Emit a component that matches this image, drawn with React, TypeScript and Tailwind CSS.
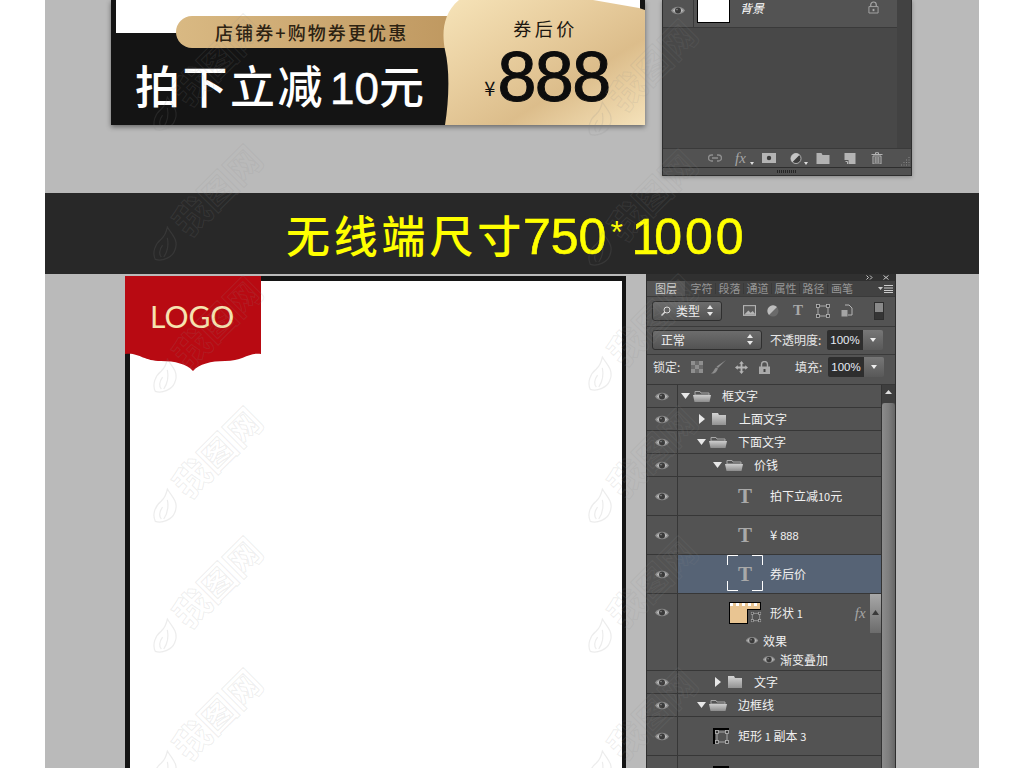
import React from "react";

const Eye = ({ className = "" }: { className?: string }) => (
  <svg viewBox="0 0 14 11" className={`w-[14px] h-[11px] shrink-0 ${className}`}>
    <path d="M0 5.5C3 0.5 11 0.5 14 5.5C11 10.5 3 10.5 0 5.5Z" fill="#8e8e8e" />
    <path d="M1.8 5.5C4 2.2 10 2.2 12.2 5.5C10 8.8 4 8.8 1.8 5.5Z" fill="#b9b9b9" />
    <circle cx="7" cy="5.5" r="3" fill="#3a3a3a" />
    <circle cx="6" cy="4.6" r="0.8" fill="#8e8e8e" />
  </svg>
);

const OpenFolder = () => (
  <svg viewBox="0 0 18 12" className="w-[18px] h-[12px] shrink-0">
    <defs>
      <linearGradient id="of" x1="0" y1="0" x2="0" y2="1">
        <stop offset="0" stopColor="#cdcdcd" />
        <stop offset="1" stopColor="#8c8c8c" />
      </linearGradient>
    </defs>
    <path d="M2 5V1.5H7L8 3H16V5Z" fill="none" stroke="#a8a8a8" />
    <path d="M0 5H18L16.5 12H1.5Z" fill="url(#of)" />
  </svg>
);

const ClosedFolder = () => (
  <svg viewBox="0 0 14 12" className="w-[14px] h-[12px] shrink-0">
    <defs>
      <linearGradient id="cf" x1="0" y1="0" x2="0" y2="1">
        <stop offset="0" stopColor="#d5d5d5" />
        <stop offset="1" stopColor="#929292" />
      </linearGradient>
    </defs>
    <path d="M0 0H6L7 2H14V12H0Z" fill="url(#cf)" />
  </svg>
);

const Down = () => (
  <svg viewBox="0 0 9 6" className="w-[9px] h-[6px] shrink-0">
    <path d="M0 0H9L4.5 6Z" fill="#e8e8e8" />
  </svg>
);
const Right = () => (
  <svg viewBox="0 0 6 10" className="w-[6px] h-[10px] shrink-0">
    <path d="M0 0L6 5L0 10Z" fill="#e8e8e8" />
  </svg>
);

const TGlyph = () => (
  <span className="font-['Liberation_Serif',serif] font-bold text-[21px] leading-none text-[#a9a9a9] w-[16px] text-center">
    T
  </span>
);

const ShapeCorners = () => (
  <svg viewBox="0 0 14 14" className="w-[14px] h-[14px]">
    <rect x="2" y="2" width="10" height="10" fill="none" stroke="#a8a8a8" />
    <g fill="#3c3c3c" stroke="#b8b8b8" strokeWidth="0.8">
      <rect x="0.5" y="0.5" width="3" height="3" />
      <rect x="10.5" y="0.5" width="3" height="3" />
      <rect x="0.5" y="10.5" width="3" height="3" />
      <rect x="10.5" y="10.5" width="3" height="3" />
    </g>
  </svg>
);

const RowWrap = ({
  h,
  selected,
  children,
  eye = true,
}: {
  h: string;
  selected?: boolean;
  children: React.ReactNode;
  eye?: boolean;
}) => (
  <div className={`flex shrink-0 border-b border-[#373737] ${h}`}>
    <div className="w-[31px] shrink-0 border-r border-[#373737] flex items-center justify-center">
      {eye && <Eye />}
    </div>
    <div className={`flex-1 flex items-center ${selected ? "bg-[#566375]" : ""}`}>{children}</div>
  </div>
);

const Label = ({ children, className = "" }: { children: React.ReactNode; className?: string }) => (
  <span className={`text-[12px] leading-none text-[#f0f0f0] whitespace-nowrap ${className}`}>{children}</span>
);

const GroupRow = ({ pl, open, name, gap }: { pl: string; open: boolean; name: string; gap: string }) => (
  <RowWrap h="h-[23px]">
    <div className={`flex items-center ${pl}`}>
      {open ? <Down /> : <Right />}
      <span className={open ? "ml-[3px]" : "ml-[7px]"}>{open ? <OpenFolder /> : <ClosedFolder />}</span>
      <Label className={gap}>{name}</Label>
    </div>
  </RowWrap>
);

const TextRow = ({ name, selected }: { name: React.ReactNode; selected?: boolean }) => (
  <RowWrap h="h-[39px]" selected={selected}>
    <div className="flex items-center pl-[59px]">
      <div className="relative w-[16px] flex justify-center">
        <TGlyph />
        {selected && (
          <div className="absolute -left-[10px] -top-[9px] w-[36px] h-[36px]">
            <svg viewBox="0 0 36 36" className="w-[36px] h-[36px]">
              <path d="M0.5 10V0.5H11M25 0.5H35.5V10M35.5 26V35.5H25M11 35.5H0.5V26" fill="none" stroke="#fff" />
            </svg>
          </div>
        )}
      </div>
      <Label className="ml-[17px]">{name}</Label>
    </div>
  </RowWrap>
);

const Sel = ({ w, children }: { w: string; children: React.ReactNode }) => (
  <div className={`${w} flex items-center justify-between rounded-[3px] border border-[#2f2f2f] bg-gradient-to-b from-[#6d6d6d] to-[#535353] px-[8px] text-[12px] text-[#eee]`}>
    {children}
    <svg viewBox="0 0 6 11" className="w-[6px] h-[11px]">
      <path d="M3 0L6 4H0ZM3 11L0 7H6Z" fill="#e8e8e8" />
    </svg>
  </div>
);

const Pct = () => (
  <div className="flex h-[20px] w-[56px] rounded-[2px] overflow-hidden">
    <div className="w-[36px] bg-[#2e2e2e] text-[11.5px] leading-[20px] text-center text-[#e6ecf5] font-['Liberation_Sans',sans-serif]">100%</div>
    <div className="flex-1 bg-gradient-to-b from-[#777] to-[#595959] flex items-center justify-center">
      <svg viewBox="0 0 6 4" className="w-[6px] h-[4px]">
        <path d="M0 0H6L3 4Z" fill="#eee" />
      </svg>
    </div>
  </div>
);

const Tiny = () => (
  <svg viewBox="0 0 4 3" className="w-[4px] h-[3px] self-end -ml-[12px] -mr-[5px] mb-[2px]">
    <path d="M0 0H4L2 3Z" fill="#ddd" />
  </svg>
);

const marks: [number, number][] = [
  [210, 70], [645, 75],
  [210, 200], [645, 205],
  [210, 332], [645, 330],
  [210, 462], [645, 462],
  [210, 592], [645, 592],
  [210, 724], [645, 724],
];

const Watermark = ({ x, y }: { x: number; y: number }) => (
  <div
    className="absolute flex items-center -rotate-45 w-[160px] h-[40px] -ml-[80px] -mt-[20px]"
    style={{ left: x, top: y }}
  >
    <svg viewBox="0 0 30 30" className="w-[36px] h-[36px] shrink-0 rotate-45">
      <path d="M16 1C20 8 26 12 22 21C20 26 12 30 6 28C3 22 6 15 11 11C13 9 15 6 16 1ZM12 16C9 20 9 24 11 26M16 10C17 15 17 20 13 26" fill="none" stroke="#8a8a8a" strokeOpacity="0.16" />
    </svg>
    <span className="ml-[2px] text-[36px] leading-[40px] font-bold whitespace-nowrap text-transparent [-webkit-text-stroke:1px_rgba(140,140,140,0.15)]">
      我图网
    </span>
  </div>
);

export default function App() {
  return (
    <div className="relative w-[1024px] h-[768px] overflow-hidden bg-white font-['Liberation_Sans','Noto_Sans_CJK_SC',sans-serif]">
      <div className="ml-[45px] w-[934px] h-[768px] bg-[#bababa] flex flex-col">
        {/* top preview */}
        <div className="h-[193px] shrink-0 flex items-start pl-[66px] font-['Noto_Sans_CJK_SC',sans-serif]">
          <div className="relative w-[534px] h-[125px] bg-[#141414] shadow-[0_2px_5px_rgba(0,0,0,0.45)]">
            <div className="ml-[5px] w-[524px] h-[33px] bg-white" />
            <div className="pl-[24px] pt-[27px] text-white font-medium text-[45px] leading-[50px] tracking-[2.5px] whitespace-nowrap">
              拍下立减<span className="font-['Liberation_Sans',sans-serif] font-normal text-[44px] tracking-[0px] ml-[5px] [-webkit-text-stroke:0.5px_#ffffff]">10</span>元
            </div>
            <div className="absolute left-[65px] top-[16px] w-[280px] h-[32px] rounded-l-[16px] bg-gradient-to-r from-[#d9b983] to-[#bf9860] text-[#2c2212] font-medium text-[18px] leading-[32px] pl-[39px] tracking-[2.1px] whitespace-nowrap">
              店铺券+购物券更优惠
            </div>
            <div className="absolute left-[332px] top-0 w-[202px] h-[125px] flex flex-col items-center">
              <svg viewBox="0 0 202 125" className="absolute inset-0 w-[202px] h-[125px]">
                <defs>
                  <linearGradient id="gold" x1="0" y1="0" x2="1" y2="1">
                    <stop offset="0" stopColor="#f6e3b8" />
                    <stop offset="0.35" stopColor="#e9cfa0" />
                    <stop offset="0.65" stopColor="#dcbd8b" />
                    <stop offset="1" stopColor="#f5e2ba" />
                  </linearGradient>
                </defs>
                <path d="M2 125C6 100 7 70 2 50C-1 35 -1 14 16 0H150L196 8L202 10V125Z" fill="url(#gold)" />
              </svg>
              <div className="relative mt-[15px] ml-[3px] text-[18px] leading-[26px] tracking-[3.5px] text-[#1c1710]">券后价</div>
              <div className="relative flex items-end mt-[6px] ml-[6px]">
                <span className="text-[20px] leading-[22px] mb-[8px] mr-[2px] text-[#111]">¥</span>
                <span className="font-['Liberation_Sans',sans-serif] text-[70px] leading-[60px] tracking-[-1.5px] text-[#0d0d0d] [-webkit-text-stroke:1px_#0d0d0d]">888</span>
              </div>
            </div>
          </div>

          <div className="ml-[17px] w-[250px] h-[176px] bg-[#484848] border border-t-0 border-[#2e2e2e] shadow-[0_1px_4px_rgba(0,0,0,0.3)] flex flex-col">
            <div className="flex-1 flex">
              <div className="w-[234px] flex flex-col">
                <div className="h-[28px] flex bg-[#535353] border-b border-[#3a3a3a]">
                  <div className="w-[31px] border-r border-[#3a3a3a] flex items-center justify-center pb-[7px]">
                    <Eye />
                  </div>
                  <div className="w-[33px] h-[23px] ml-[3px] bg-white border border-black border-t-0" />
                  <span className="ml-[10px] text-[12px] leading-[16px] italic text-white">背景</span>
                  <svg viewBox="0 0 12 14" className="w-[11px] h-[13px] ml-[104px] mt-[1px]">
                    <path d="M3 6V4a3 3 0 0 1 6 0v2" fill="none" stroke="#a8a8a8" strokeWidth="1.3" />
                    <path d="M1 6H11V13H1Z" fill="none" stroke="#a8a8a8" />
                    <rect x="5" y="8.5" width="2" height="2.5" fill="#a8a8a8" />
                  </svg>
                </div>
              </div>
              <div className="flex-1 bg-[#424242]" />
            </div>
            <div className="h-[20px] bg-[#525252] border-t border-[#3a3a3a] border-b-[#2e2e2e] border-b flex items-center pl-[45px] gap-[13px]">
              <svg viewBox="0 0 14 8" className="w-[14px] h-[8px]">
                <path d="M5 1H3.5a3 3 0 0 0 0 6H5M9 1h1.5a3 3 0 0 1 0 6H9M4 4H10" fill="none" stroke="#8e8e8e" strokeWidth="1.4" />
              </svg>
              <span className="w-[14px] text-[15px] leading-none italic text-[#a5a5a5] font-['Liberation_Serif',serif]">fx</span>
              <Tiny />
              <svg viewBox="0 0 14 10" className="w-[14px] h-[10px]">
                <rect width="14" height="10" fill="#b4b4b4" />
                <circle cx="7" cy="5" r="2.2" fill="#3b3b3b" />
              </svg>
              <svg viewBox="0 0 12 12" className="w-[14px] h-[11px]">
                <circle cx="6" cy="6" r="5.5" fill="#3d3d3d" stroke="#b8b8b8" />
                <path d="M10 2A5.5 5.5 0 0 0 2 10Z" fill="#c5c5c5" />
              </svg>
              <Tiny />
              <svg viewBox="0 0 13 11" className="w-[14px] h-[11px]">
                <path d="M0 0H5L6 2H13V11H0Z" fill="#b2b2b2" />
              </svg>
              <svg viewBox="0 0 11 11" className="w-[14px] h-[11px]">
                <path d="M0 0H11V11H4V7H0Z" fill="#b4b4b4" />
                <path d="M1 8.5H3V11" fill="none" stroke="#b4b4b4" />
              </svg>
              <svg viewBox="0 0 11 12" className="w-[14px] h-[12px]">
                <path d="M0 2.5H11M4 2V0.7H7V2M1.5 4H9.5V12H1.5ZM3.7 5V11M5.5 5V11M7.3 5V11" fill="none" stroke="#b4b4b4" />
              </svg>
              <svg viewBox="0 0 10 10" className="w-[10px] h-[10px] ml-[3px] self-end mb-[1px]">
                <path d="M9 1V2M6.5 3.5V4.5M9 3.5V4.5M4 6V7M6.5 6V7M9 6V7M1.5 8.5V9.5M4 8.5V9.5M6.5 8.5V9.5M9 8.5V9.5" stroke="#8a8a8a" />
              </svg>
            </div>
            <div className="h-[7px] bg-[#505050] flex items-center justify-center">
              <div className="w-[20px] h-[3px] bg-[repeating-linear-gradient(90deg,#262626_0_1px,transparent_1px_2px)]" />
            </div>
          </div>
        </div>

        {/* banner */}
        <div className="h-[81px] shrink-0 bg-[#282828] flex items-center pl-[241px] text-[#ffff00] whitespace-nowrap">
          <span className="font-['Noto_Sans_CJK_SC',sans-serif] font-medium text-[44px] leading-none tracking-[3.8px]">无线端尺寸</span>
          <span className="-ml-[2px] mt-[7px] text-[50px] leading-none [-webkit-text-stroke:0.6px_#ffff00]">750</span>
          <span className="text-[32px] leading-none self-start mt-[23px] w-[25px] pl-[4px]">*</span>
          <span className="mt-[7px] text-[50px] leading-none [-webkit-text-stroke:0.6px_#ffff00]">
            <span className="tracking-[-5px]">1</span>
            <span className="tracking-[3px]">000</span>
          </span>
        </div>

        {/* bottom */}
        <div className="flex-1 flex items-start pl-[80px] overflow-hidden font-['Noto_Sans_CJK_SC',sans-serif]">
          <div className="relative mt-[2px] w-[501px] h-[500px] bg-white border-[5px] border-[#141414] border-r-[4px]">
            <div className="absolute -left-[5px] -top-[5px] w-[136px] h-[96px]">
              <svg viewBox="0 0 136 96" className="absolute inset-0 w-[136px] h-[96px]">
                <path d="M0 0H136V78C124 76 118 85 100 85C86 85 74 88 68 95C62 88 50 85 36 85C18 85 14 76 0 78Z" fill="#b80a12" />
              </svg>
              <span className="relative block pt-[20px] pl-[25px] font-['Lato',sans-serif] font-normal text-[30px] leading-[40px] text-[#f6e3b0]">LOGO</span>
            </div>
          </div>

          <div className="ml-[20px] w-[250px] h-[500px] bg-[#535353] border-x border-[#2e2e2e] flex flex-col">
            <div className="h-[7px] shrink-0 bg-[#303030] flex justify-end items-center pr-[6px] gap-[10px]">
              <svg viewBox="0 0 7 5" className="w-[7px] h-[5px]">
                <path d="M0.5 0.5L2.5 2.5L0.5 4.5M4 0.5L6 2.5L4 4.5" fill="none" stroke="#c8c8c8" />
              </svg>
              <svg viewBox="0 0 6 5" className="w-[6px] h-[5px]">
                <path d="M0.5 0.5L5.5 4.5M5.5 0.5L0.5 4.5" stroke="#c8c8c8" />
              </svg>
            </div>
            <div className="h-[16px] shrink-0 bg-[#424242] flex items-center text-[11px] leading-none text-[#979797] border-b border-[#3a3a3a]">
              <div className="w-[38px] h-full bg-[#545454] flex items-center pl-[8px] text-[#d0d0d0] whitespace-nowrap">图层</div>
              <div className="pl-[3px] flex whitespace-nowrap">
                <span className="w-[28px] text-center border-r border-[#3a3a3a]">字符</span>
                <span className="w-[28px] text-center border-r border-[#3a3a3a]">段落</span>
                <span className="w-[28px] text-center border-r border-[#3a3a3a]">通道</span>
                <span className="w-[28px] text-center border-r border-[#3a3a3a]">属性</span>
                <span className="w-[28px] text-center border-r border-[#3a3a3a]">路径</span>
                <span className="w-[28px] text-center">画笔</span>
              </div>
              <svg viewBox="0 0 15 8" className="w-[15px] h-[8px] ml-[22px]">
                <path d="M0 2H5L2.5 5Z" fill="#ccc" />
                <path d="M6 0.5H15M6 3H15M6 5.5H15M6 7.5H15" stroke="#ccc" />
              </svg>
            </div>
            {/* filter row */}
            <div className="h-[30px] shrink-0 border-b border-[#3a3a3a] flex items-center pl-[5px] pb-[2px]">
              <Sel w="w-[70px] h-[20px]">
                <span className="flex items-center gap-[5px]">
                  <svg viewBox="0 0 10 10" className="w-[10px] h-[10px]">
                    <circle cx="6" cy="4" r="3" fill="none" stroke="#ddd" />
                    <path d="M4 6L0.5 9.5" stroke="#ddd" strokeWidth="1.4" />
                  </svg>
                  类型
                </span>
              </Sel>
              <svg viewBox="0 0 12 10" className="w-[13px] h-[11px] ml-[21px]">
                <rect x="0.5" y="0.5" width="11" height="9" fill="#5c5c5c" stroke="#b5b5b5" />
                <path d="M1 9L5 5L7 7L9 5.5L11 8V9Z" fill="#b5b5b5" />
              </svg>
              <svg viewBox="0 0 12 12" className="w-[12px] h-[12px] ml-[11px]">
                <circle cx="6" cy="6" r="5.5" fill="#6a6a6a" />
                <path d="M10 2A5.5 5.5 0 0 0 2 10Z" fill="#bdbdbd" />
              </svg>
              <span className="w-[12px] ml-[13px] font-['Liberation_Serif',serif] font-bold text-[15px] leading-none text-[#a8a8a8] text-center">T</span>
              <span className="ml-[12px]"><ShapeCorners /></span>
              <svg viewBox="0 0 12 13" className="w-[12px] h-[13px] ml-[11px]">
                <path d="M4 1H8L11 4V11H7" fill="none" stroke="#b5b5b5" />
                <rect x="0.5" y="6" width="6" height="6.5" fill="#a5a5a5" />
              </svg>
              <div className="w-[10px] h-[18px] ml-[21px] bg-[#353535] border border-[#2e2e2e] flex flex-col">
                <div className="h-[9px] bg-[#8a8a8a]" />
              </div>
            </div>
            {/* blend row */}
            <div className="h-[28px] shrink-0 border-b border-[#3a3a3a] flex items-center pl-[5px] pb-[2px] text-[12px] text-[#e6e6e6]">
              <Sel w="w-[110px] h-[20px]"><span>正常</span></Sel>
              <span className="ml-[8px] mr-[5px] w-[52px] whitespace-nowrap">不透明度:</span>
              <Pct />
            </div>
            {/* lock row */}
            <div className="h-[30px] shrink-0 border-b border-[#373737] flex items-center pl-[6px] pb-[5px] text-[12px] text-[#e6e6e6]">
              <span className="w-[30px] whitespace-nowrap">锁定:</span>
              <svg viewBox="0 0 12 12" className="w-[12px] h-[12px] ml-[8px]">
                <rect width="12" height="12" fill="#6c6c6c" />
                <path d="M0 0H4V4H0ZM8 0H12V4H8ZM4 4H8V8H4ZM0 8H4V12H0ZM8 8H12V12H8Z" fill="#8f8f8f" />
              </svg>
              <svg viewBox="0 0 16 14" className="w-[16px] h-[14px] ml-[8px]">
                <path d="M15 0L7 8L5.5 6.5ZM7 8.5C5 14 2 13.5 0 13.5C3 12 3 9 5 7.5Z" fill="#8e8e8e" />
              </svg>
              <svg viewBox="0 0 14 14" className="w-[13px] h-[13px] ml-[8px]">
                <path d="M7 0L9.5 3H8V6H11V4.5L14 7L11 9.5V8H8V11H9.5L7 14L4.5 11H6V8H3V9.5L0 7L3 4.5V6H6V3H4.5Z" fill="#b5b5b5" />
              </svg>
              <svg viewBox="0 0 11 13" className="w-[11px] h-[13px] ml-[11px]">
                <path d="M2.5 6V3.5a3 3 0 0 1 6 0V6" fill="none" stroke="#aaa" strokeWidth="1.4" />
                <rect y="5.5" width="11" height="7.5" fill="#aaa" />
                <rect x="4.5" y="8" width="2" height="3" fill="#444" />
              </svg>
              <span className="ml-[25px] mr-[5px] w-[28px] whitespace-nowrap">填充:</span>
              <Pct />
            </div>
            {/* layers */}
            <div className="flex-1 flex overflow-hidden">
              <div className="w-[234px] flex flex-col">
                <GroupRow pl="pl-[3px]" open name="框文字" gap="ml-[11px]" />
                <GroupRow pl="pl-[21px]" open={false} name="上面文字" gap="ml-[13px]" />
                <GroupRow pl="pl-[19px]" open name="下面文字" gap="ml-[11px]" />
                <GroupRow pl="pl-[35px]" open name="价钱" gap="ml-[11px]" />
                <TextRow name={<>拍下立减<span className="text-[11px]">10</span>元</>} />
                <TextRow name={<><span className="text-[13px]">¥</span><span className="ml-[3px] text-[11px] font-['Liberation_Sans',sans-serif]">888</span></>} />
                <TextRow name="券后价" selected />
                <div className="h-[77px] shrink-0 flex border-b border-[#373737] relative">
                  <div className="w-[31px] shrink-0 border-r border-[#373737] flex justify-center pt-[13px]">
                    <Eye />
                  </div>
                  <div className="flex-1 flex flex-col">
                    <div className="h-[38px] flex items-center pl-[51px]">
                      <div className="relative w-[32px] h-[22px] border border-black bg-[#e9c592]">
                        <div className="h-[3px] bg-[repeating-linear-gradient(90deg,#ffffff_0_3px,#e9c592_3px_6px)]" />
                        <div className="absolute right-[-1px] bottom-[-1px] w-[14px] h-[15px] bg-[#535353] border-l border-t border-black flex items-center justify-center pl-[2px]">
                          <span className="scale-75"><ShapeCorners /></span>
                        </div>
                      </div>
                      <Label className="ml-[9px]">形状 <span className="text-[11px]">1</span></Label>
                      <span className="ml-[52px] text-[15px] leading-none italic text-[#a5a5a5] font-['Liberation_Serif',serif]">fx</span>
                    </div>
                    <div className="h-[17px] flex items-center pl-[67px]">
                      <Eye className="scale-90" />
                      <Label className="ml-[4px]">效果</Label>
                    </div>
                    <div className="h-[21px] flex items-center pl-[84px]">
                      <Eye className="scale-90" />
                      <Label className="ml-[4px]">渐变叠加</Label>
                    </div>
                  </div>
                  <div className="absolute right-0 top-0 w-[11px] h-[39px] bg-gradient-to-b from-[#a8a8a8] to-[#6c6c6c] flex justify-center pt-[16px]">
                    <svg viewBox="0 0 7 5" className="w-[7px] h-[5px]"><path d="M3.5 0L7 5H0Z" fill="#3a3a3a" /></svg>
                  </div>
                </div>
                <GroupRow pl="pl-[37px]" open={false} name="文字" gap="ml-[12px]" />
                <GroupRow pl="pl-[19px]" open name="边框线" gap="ml-[11px]" />
                <RowWrap h="h-[39px]">
                  <div className="flex items-center pl-[35px]">
                    <div className="relative w-[16px] h-[16px] border-l-2 border-t-2 border-black flex items-center justify-center">
                      <ShapeCorners />
                    </div>
                    <Label className="ml-[9px]">矩形 <span className="text-[11px]">1</span> 副本 <span className="text-[11px]">3</span></Label>
                  </div>
                </RowWrap>
                <RowWrap h="h-[39px]">
                  <div className="pl-[35px] h-full pt-[10px]">
                    <div className="w-[16px] h-[16px] border-l-2 border-t-2 border-black bg-black" />
                  </div>
                </RowWrap>
              </div>
              <div className="flex-1 flex flex-col bg-[#4a4a4a] border-l border-[#333]">
                <div className="h-[18px] shrink-0 flex justify-center pt-[5px] bg-[#3e3e3e]">
                  <svg viewBox="0 0 7 4" className="w-[7px] h-[4px]"><path d="M3.5 0L7 4H0Z" fill="#ddd" /></svg>
                </div>
                <div className="flex-1 rounded-t-[3px] bg-gradient-to-r from-[#8c8c8c] via-[#7e7e7e] to-[#666]" />
              </div>
            </div>
          </div>
        </div>
      </div>

      {/* watermark overlay */}
      <div className="absolute inset-0 pointer-events-none">
        {marks.map(([x, y]) => (
          <Watermark key={`${x}-${y}`} x={x} y={y} />
        ))}
      </div>
    </div>
  );
}
